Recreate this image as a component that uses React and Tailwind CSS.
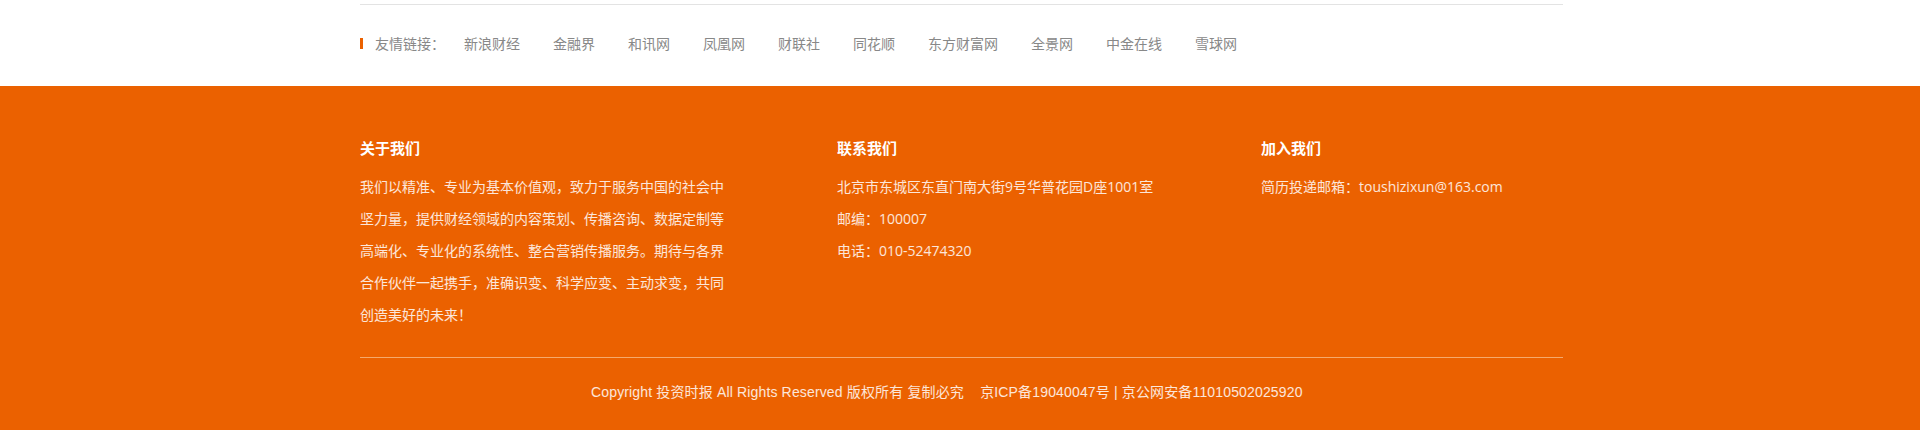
import React from 'react';

const links = ['新浪财经', '金融界', '和讯网', '凤凰网', '财联社', '同花顺', '东方财富网', '全景网', '中金在线', '雪球网'];

const cjk = { fontFamily: '"Noto Sans CJK SC", "Noto Sans", sans-serif' };
const body = { fontFamily: '"Open Sans", "Noto Sans CJK SC", sans-serif' };
const copy = { fontFamily: '"Liberation Sans", "Noto Sans CJK SC", sans-serif' };

export default function App() {
  return (
    <div className="w-full min-w-[1920px]">
      {/* friend links */}
      <div className="h-[86px] bg-white">
        <div className="w-[1203px] ml-[360px] pt-[4px]">
          <div className="border-t border-[#e3e3e3]" />
          <div className="mt-[28px] h-[20px] flex items-center text-[14px] text-[#888]" style={cjk}>
            <span className="w-[3px] h-[11px] bg-[#eb6100]" />
            <span className="ml-[12px] leading-[20px]">友情链接：</span>
            <div className="ml-[19px] flex gap-[33px]">
              {links.map((l) => (
                <a key={l} href="#" className="leading-[20px] hover:text-[#eb6100]">{l}</a>
              ))}
            </div>
          </div>
        </div>
      </div>

      {/* footer */}
      <div className="h-[344px] bg-[#eb6100]">
        <div className="w-[1203px] ml-[360px] pt-[52px]">
          <div className="flex">
            <div className="w-[477px]">
              <h4 className="text-[15px] leading-[20px] font-bold text-white" style={cjk}>关于我们</h4>
              <p className="mt-[13px] w-[370px] text-[14px] leading-[32px] text-white/85" style={body}>
                我们以精准、专业为基本价值观，致力于服务中国的社会中坚力量，提供财经领域的内容策划、传播咨询、数据定制等高端化、专业化的系统性、整合营销传播服务。期待与各界合作伙伴一起携手，准确识变、科学应变、主动求变，共同创造美好的未来！
              </p>
            </div>
            <div className="w-[424px]">
              <h4 className="text-[15px] leading-[20px] font-bold text-white" style={cjk}>联系我们</h4>
              <div className="mt-[13px] text-[14px] leading-[32px] text-white/85" style={body}>
                <p>北京市东城区东直门南大街9号华普花园D座1001室</p>
                <p>邮编：100007</p>
                <p>电话：010-52474320</p>
              </div>
            </div>
            <div className="flex-1">
              <h4 className="text-[15px] leading-[20px] font-bold text-white" style={cjk}>加入我们</h4>
              <div className="mt-[13px] text-[14px] leading-[32px] text-white/85" style={body}>
                <p>简历投递邮箱：toushizixun@163.com</p>
              </div>
            </div>
          </div>

          <div className="mt-[26px] border-t border-[#f5a96c]" />
          <p className="mt-[24px] pl-[231px] text-[14px] leading-[20px] tracking-[0.15px] text-white/85 whitespace-pre" style={copy}>
            {'Copyright 投资时报 All Rights Reserved 版权所有 复制必究    京ICP备19040047号 | 京公网安备11010502025920'}
          </p>
        </div>
      </div>
    </div>
  );
}
